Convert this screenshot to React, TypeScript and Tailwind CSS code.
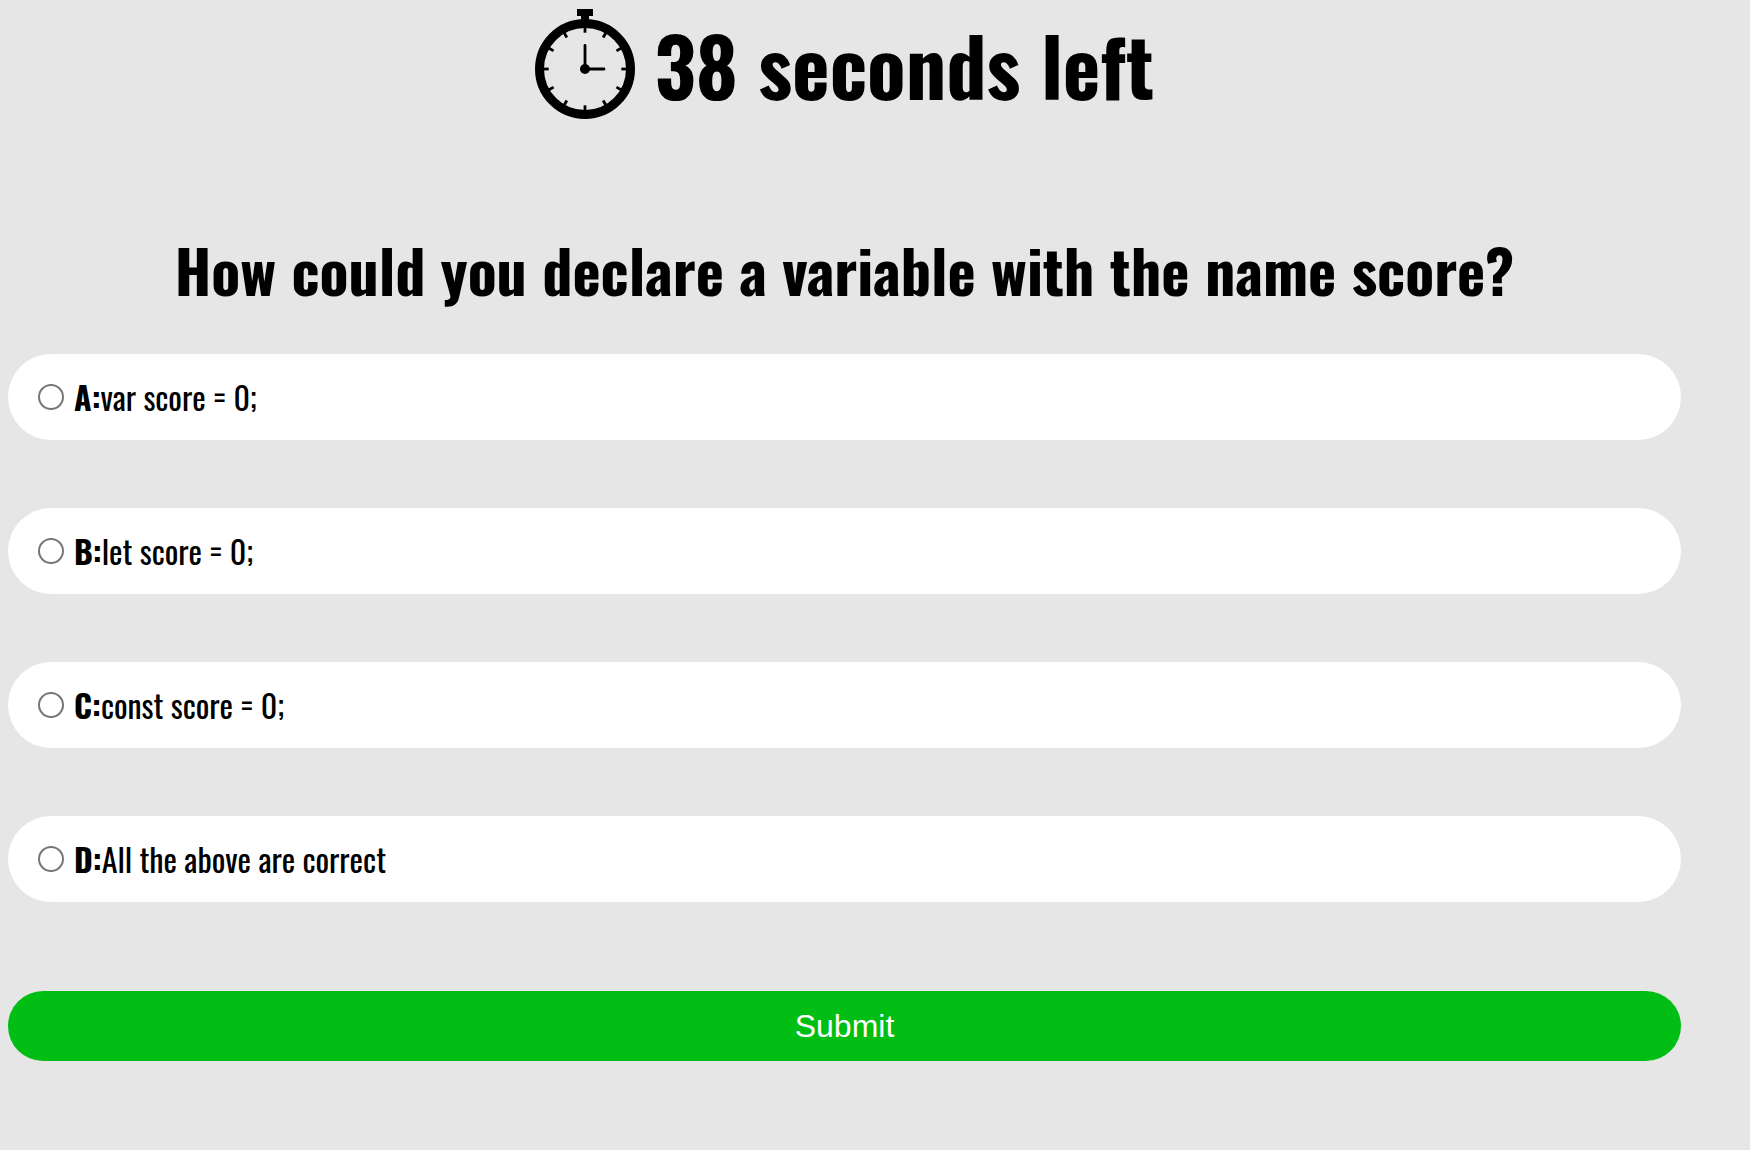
const answers = [
  { letter: "A", text: "var score = 0;" },
  { letter: "B", text: "let score = 0;" },
  { letter: "C", text: "const score = 0;" },
  { letter: "D", text: "All the above are correct" },
];

const ticks = [0, 30, 60, 90, 120, 150, 180, 210, 240, 270, 300, 330];

function Stopwatch() {
  return (
    <svg className="h-[110px] w-[100px] shrink-0" viewBox="0 0 100 110" aria-hidden="true">
      <path d="M42 0H58V7H54V14H46V7H42Z" />
      <circle cx="50" cy="60" r="45.500" fill="none" stroke="#000" strokeWidth="9" />
      {ticks.map((angle) => (
        <path
          key={angle}
          d="M50 17V23.700"
          stroke="#000"
          strokeWidth="2.800"
          transform={`rotate(${angle} 50 60)`}
        />
      ))}
      <path d="M50 36.500V60H69" fill="none" stroke="#000" strokeWidth="2.800" strokeLinecap="round" />
      <circle cx="50" cy="60" r="5" />
    </svg>
  );
}

export default function App() {
  return (
    <main className="min-h-screen bg-[#e6e6e6] pt-[9px] pr-[69px] pb-20 pl-2 font-[Oswald,sans-serif] text-black">
      <h1 className="flex items-center justify-center gap-5 text-[80px] leading-[110px] font-bold">
        <Stopwatch />
        38 seconds left
      </h1>
      <form className="mt-[104px]" onSubmit={(event) => event.preventDefault()}>
        <fieldset>
          <legend className="mb-10 w-full text-center text-[60px] leading-[91px] font-bold">
            How could you declare a variable with the name score?
          </legend>
          <div className="flex flex-col gap-[68px]">
            {answers.map(({ letter, text }) => (
              <label
                key={letter}
                className="flex items-center rounded-full bg-white py-5 pl-[30px] text-[32px] leading-[46px]"
              >
                <input
                  type="radio"
                  name="answer"
                  value={letter}
                  className="mr-2.5 size-[26px] shrink-0 appearance-none rounded-full border-2 border-[#767676] bg-white checked:border-8 checked:border-[#0075ff]"
                />
                <span>
                  <b className="font-bold">{letter}:</b>
                  {text}
                </span>
              </label>
            ))}
          </div>
        </fieldset>
        <button
          type="submit"
          className="mt-[89px] h-[70px] w-full rounded-full bg-[#00be14] font-['Liberation_Sans',Arial,sans-serif] text-[32px] text-white"
        >
          Submit
        </button>
      </form>
    </main>
  );
}
